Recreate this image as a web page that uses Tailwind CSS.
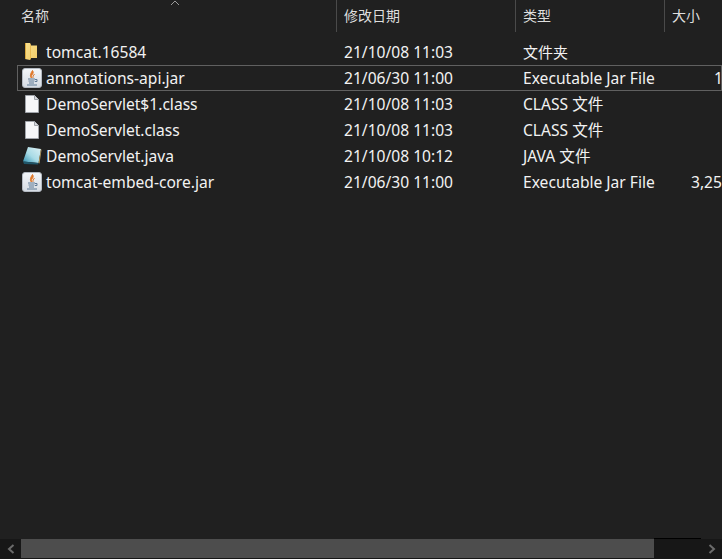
<!DOCTYPE html>
<html lang="zh-CN">
<head>
    <meta charset="utf-8">
    <title>tomcat</title>
    <script src="https://cdn.jsdelivr.net/npm/@tailwindcss/browser@4"></script>
</head>
<body class="relative w-[722px] h-[559px] overflow-hidden bg-[#202020] text-[#f2f2f2] text-[15.6px] leading-[24px] font-['Noto_Sans','Noto_Sans_CJK_SC',sans-serif] flex flex-col">
    <!-- Header -->
    <div class="relative h-[32px] flex text-[#dedede] text-[14px] leading-[26px] shrink-0">
        <svg class="absolute left-[170px] top-0" width="10" height="5" viewBox="0 0 10 5" fill="none" stroke="#9a9a9a"><path d="M1 5 L5 1 L9 5"/></svg>
        <div class="w-[337px] pl-[21px] pt-[3px] border-r border-[#4a4a4a]">名称</div>
        <div class="w-[179px] pl-[7px] pt-[3px] border-r border-[#4a4a4a]">修改日期</div>
        <div class="w-[149px] pl-[7px] pt-[3px] border-r border-[#4a4a4a]">类型</div>
        <div class="pl-[7px] pt-[3px]">大小</div>
    </div>

    <!-- Files -->
    <div class="flex-1 pt-[7px] whitespace-nowrap">
        <div class="flex h-[26px] ml-[17px] border border-transparent box-border">
            <div class="w-[319px] shrink-0 flex items-center"><svg class="ml-[6px] mr-[8px] shrink-0" width="14" height="18" viewBox="0 0 14 18"><defs><linearGradient id="fold" x1="0" y1="0" x2="1" y2="1"><stop offset="0" stop-color="#f8e08e"/><stop offset="1" stop-color="#f2cc68"/></linearGradient></defs><path d="M1 0 H6 L7 2.5 H13 V15 H7 L6 17 L1 16 Z" fill="url(#fold)"/><path d="M1 0 H2 V16 H1 Z" fill="#d9a83e"/><path d="M6 0 L7 2.5 V15 L6 17 Z" fill="#e9bb52"/></svg><span>tomcat.16584</span></div>
            <div class="w-[179px] shrink-0 pl-[7px]">21/10/08 11:03</div>
            <div class="w-[149px] shrink-0 pl-[7px] text-[15px]">文件夹</div>
        </div>
        <div class="flex h-[26px] ml-[17px] border border-[#606060] box-border">
            <div class="w-[319px] shrink-0 flex items-center"><svg class="ml-[4px] mr-[4px] shrink-0" width="20" height="20" viewBox="0 0 20 20"><defs><linearGradient id="tile" x1="0" y1="0" x2="0" y2="1"><stop offset="0" stop-color="#f4f6f9"/><stop offset="1" stop-color="#d5dbe3"/></linearGradient></defs><rect x="0.5" y="0.5" width="19" height="19" rx="2.5" fill="url(#tile)" stroke="#b4bac2"/><path d="M10.5 2.5 C13 6 8 7 9.5 10 C7.5 8 8.5 5.5 10.5 2.5 Z" fill="#e0782a" stroke="#e0782a"/><path d="M12.5 6 C11.5 7.5 10.5 8.5 11 10" fill="none" stroke="#e0782a"/><path d="M6 11 H13 M6.5 13 H12.5 M7 15 H12 M5 17 H15" stroke="#5f7a96"/><path d="M13 11.5 H15 V13.5 H13" fill="none" stroke="#5f7a96"/></svg><span>annotations-api.jar</span></div>
            <div class="w-[179px] shrink-0 pl-[7px]">21/06/30 11:00</div>
            <div class="w-[149px] shrink-0 pl-[7px]">Executable Jar File</div>
            <div class="shrink-0 pl-[49px]">1</div>
        </div>
        <div class="flex h-[26px] ml-[17px] border border-transparent box-border">
            <div class="w-[319px] shrink-0 flex items-center"><svg class="ml-[7px] mr-[7px] shrink-0" width="14" height="18" viewBox="0 0 14 18"><path d="M0.5 0.5 H9.5 L13.5 4.5 V17.5 H0.5 Z" fill="#f6f7f9" stroke="#a0a4aa"/><path d="M9.5 0.5 V4.5 H13.5" fill="#d5d8dd" stroke="#a0a4aa"/></svg><span>DemoServlet$1.class</span></div>
            <div class="w-[179px] shrink-0 pl-[7px]">21/10/08 11:03</div>
            <div class="w-[149px] shrink-0 pl-[7px]">CLASS 文件</div>
        </div>
        <div class="flex h-[26px] ml-[17px] border border-transparent box-border">
            <div class="w-[319px] shrink-0 flex items-center"><svg class="ml-[7px] mr-[7px] shrink-0" width="14" height="18" viewBox="0 0 14 18"><path d="M0.5 0.5 H9.5 L13.5 4.5 V17.5 H0.5 Z" fill="#f6f7f9" stroke="#a0a4aa"/><path d="M9.5 0.5 V4.5 H13.5" fill="#d5d8dd" stroke="#a0a4aa"/></svg><span>DemoServlet.class</span></div>
            <div class="w-[179px] shrink-0 pl-[7px]">21/10/08 11:03</div>
            <div class="w-[149px] shrink-0 pl-[7px]">CLASS 文件</div>
        </div>
        <div class="flex h-[26px] ml-[17px] border border-transparent box-border">
            <div class="w-[319px] shrink-0 flex items-center"><svg class="ml-[4px] mr-[4px] shrink-0" width="20" height="20" viewBox="0 0 20 20"><defs><linearGradient id="note" x1="0" y1="1" x2="1" y2="0"><stop offset="0" stop-color="#2f8fae"/><stop offset="0.45" stop-color="#a8dbe6"/><stop offset="1" stop-color="#dff1f4"/></linearGradient></defs><path d="M6 1 L19 3 L16.5 17 L1 15.5 Z" fill="url(#note)"/><path d="M1 15.5 L16.5 17 L16 18.5 L2 18 Z" fill="#1f5568"/><path d="M19 3 L19.5 4 L17.5 17.5 L16.5 17 Z" fill="#b89a5a"/></svg><span>DemoServlet.java</span></div>
            <div class="w-[179px] shrink-0 pl-[7px]">21/10/08 10:12</div>
            <div class="w-[149px] shrink-0 pl-[7px]">JAVA 文件</div>
        </div>
        <div class="flex h-[26px] ml-[17px] border border-transparent box-border">
            <div class="w-[319px] shrink-0 flex items-center"><svg class="ml-[4px] mr-[4px] shrink-0" width="20" height="20" viewBox="0 0 20 20"><rect x="0.5" y="0.5" width="19" height="19" rx="2.5" fill="url(#tile)" stroke="#b4bac2"/><path d="M10.5 2.5 C13 6 8 7 9.5 10 C7.5 8 8.5 5.5 10.5 2.5 Z" fill="#e0782a" stroke="#e0782a"/><path d="M12.5 6 C11.5 7.5 10.5 8.5 11 10" fill="none" stroke="#e0782a"/><path d="M6 11 H13 M6.5 13 H12.5 M7 15 H12 M5 17 H15" stroke="#5f7a96"/><path d="M13 11.5 H15 V13.5 H13" fill="none" stroke="#5f7a96"/></svg><span>tomcat-embed-core.jar</span></div>
            <div class="w-[179px] shrink-0 pl-[7px]">21/06/30 11:00</div>
            <div class="w-[149px] shrink-0 pl-[7px]">Executable Jar File</div>
            <div class="shrink-0 pl-[26px]">3,25</div>
        </div>
    </div>

    <!-- Horizontal scrollbar -->
    <div class="relative h-[20px] flex bg-[#171717] shrink-0 items-stretch pb-[1px]">
        <div class="absolute left-[654px] top-[-1px] w-[47px] h-[1px] bg-black"></div>
        <div class="w-[21px] flex items-center justify-center"><svg width="8" height="10" viewBox="0 0 8 10" fill="none" stroke="#6b6b6b" stroke-width="2"><path d="M6.5 1 L2 5 L6.5 9"/></svg></div>
        <div class="w-[633px] bg-[#4d4d4d]"></div>
        <div class="flex-1"></div>
        <div class="w-[21px] flex items-center justify-center"><svg width="8" height="10" viewBox="0 0 8 10" fill="none" stroke="#6b6b6b" stroke-width="2"><path d="M1.5 1 L6 5 L1.5 9"/></svg></div>
    </div>
</body>
</html>
